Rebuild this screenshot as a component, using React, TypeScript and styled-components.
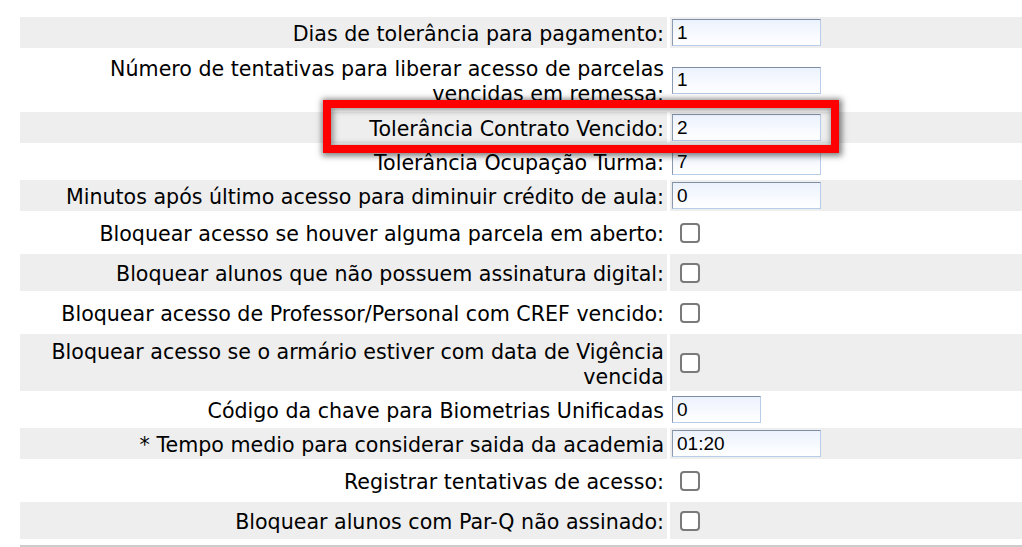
import styled, { createGlobalStyle } from "styled-components";

const GlobalStyle = createGlobalStyle`
  html, body {
    margin: 0;
    padding: 0;
    background: #ffffff;
    overflow: hidden;
  }
  body {
    font-family: "DejaVu Sans", Verdana, sans-serif;
  }
`;

const Page = styled.div`
  position: relative;
  width: 1022px;
  height: 547px;
  padding: 17px 0 0 20px;
  box-sizing: border-box;
`;

const FormTable = styled.div`
  display: flex;
  flex-direction: column;
  gap: 3px;
`;

const Row = styled.div<{ $striped: boolean; $height: number }>`
  display: grid;
  grid-template-columns: 647px 1fr;
  column-gap: 3px;
  min-height: ${({ $height }) => $height}px;

  & > div {
    background-color: ${({ $striped }) => ($striped ? "#eeeeee" : "#ffffff")};
  }
`;

const LabelCell = styled.div`
  display: flex;
  align-items: center;
  justify-content: flex-end;
  text-align: right;
  padding: 5px 3px 1px 0;
  font-size: 20.6px;
  line-height: 25px;
  color: #000000;
`;

const FieldCell = styled.div`
  display: flex;
  align-items: center;
  padding: 0 2px;
`;

const TextInput = styled.input<{ $width: number }>`
  width: ${({ $width }) => $width}px;
  height: 27px;
  box-sizing: border-box;
  padding: 0 4px;
  border-style: solid;
  border-width: 1px;
  border-color: #7f8ea4 #b8cde9 #b8cde9 #8b9ab0;
  background: linear-gradient(#ecf2fd, #ffffff);
  font-family: "Liberation Sans", Arial, sans-serif;
  font-size: 19px;
  color: #000000;
  outline: none;
`;

const Checkbox = styled.input`
  appearance: none;
  width: 20px;
  height: 20px;
  margin: 0 0 0 8px;
  box-sizing: border-box;
  border: 2px solid #7a7a7a;
  border-radius: 4px;
  background: #ffffff;
`;

const Separator = styled.div`
  margin-top: 6px;
  height: 3px;
  background: #cccccc;
`;

const Highlight = styled.div`
  position: absolute;
  left: 323px;
  top: 100px;
  width: 516px;
  height: 53px;
  box-sizing: border-box;
  border: 8px solid #ff0000;
  box-shadow: 1px 1px 6px 2px rgba(0, 0, 0, 0.5), inset 1px 1px 6px 1px rgba(0, 0, 0, 0.45);
  pointer-events: none;
`;

type Field =
  | { label: string; kind: "input"; value: string; width?: number; height?: number }
  | { label: string; kind: "check"; height?: number };

const fields: Field[] = [
  { label: "Dias de tolerância para pagamento:", kind: "input", value: "1" },
  {
    label: "Número de tentativas para liberar acesso de parcelas vencidas em remessa:",
    kind: "input",
    value: "1",
    height: 58,
  },
  { label: "Tolerância Contrato Vencido:", kind: "input", value: "2" },
  { label: "Tolerância Ocupação Turma:", kind: "input", value: "7" },
  { label: "Minutos após último acesso para diminuir crédito de aula:", kind: "input", value: "0" },
  { label: "Bloquear acesso se houver alguma parcela em aberto:", kind: "check" },
  { label: "Bloquear alunos que não possuem assinatura digital:", kind: "check" },
  { label: "Bloquear acesso de Professor/Personal com CREF vencido:", kind: "check" },
  {
    label: "Bloquear acesso se o armário estiver com data de Vigência vencida",
    kind: "check",
    height: 57,
  },
  { label: "Código da chave para Biometrias Unificadas", kind: "input", value: "0", width: 89 },
  { label: "* Tempo medio para considerar saida da academia", kind: "input", value: "01:20" },
  { label: "Registrar tentativas de acesso:", kind: "check" },
  { label: "Bloquear alunos com Par-Q não assinado:", kind: "check" },
];

export default function App() {
  return (
    <>
      <GlobalStyle />
      <Page>
        <FormTable>
          {fields.map((field, index) => (
            <Row
              key={index}
              $striped={index % 2 === 0}
              $height={field.height ?? (field.kind === "check" ? 37 : 31)}
            >
              <LabelCell>{field.label}</LabelCell>
              <FieldCell>
                {field.kind === "input" ? (
                  <TextInput $width={field.width ?? 149} defaultValue={field.value} />
                ) : (
                  <Checkbox type="checkbox" />
                )}
              </FieldCell>
            </Row>
          ))}
        </FormTable>
        <Separator />
        <Highlight />
      </Page>
    </>
  );
}
